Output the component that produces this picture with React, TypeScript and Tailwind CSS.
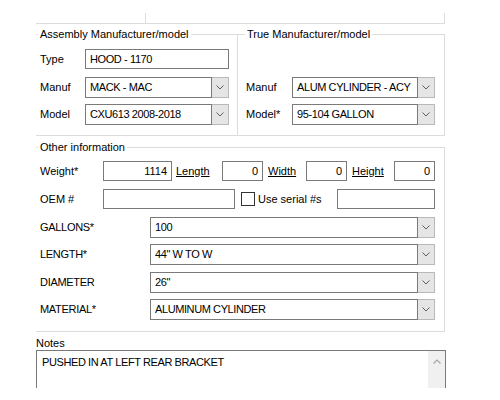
import type { ReactNode } from "react";

const FONT = { fontFamily: '"Liberation Sans", Arial, sans-serif' };

function Chevron({ color = "#5f5f5f" }: { color?: string }) {
  return (
    <svg width="8" height="5" viewBox="0 0 8 5" className="block">
      <path d="M0.5 0.5 L4 4 L7.5 0.5" fill="none" stroke={color} strokeWidth="1" />
    </svg>
  );
}

function TextBox({
  w,
  value,
  right,
  caps,
}: {
  w: string;
  value?: string;
  right?: boolean;
  caps?: boolean;
}) {
  return (
    <div
      className={`${w} h-[20px] border border-[#7a7a7a] bg-white flex items-center px-[4px] ${right ? "justify-end" : ""} ${caps ? "tracking-[-0.4px]" : ""}`}
    >
      {value}
    </div>
  );
}

function Combo({ w, value }: { w: string; value: string }) {
  return (
    <div className={`${w} h-[21px] flex`}>
      <div className="flex-1 border border-[#7a7a7a] bg-white flex items-center px-[4px] tracking-[-0.4px] whitespace-nowrap overflow-hidden">
        {value}
      </div>
      <div className="w-[17px] bg-[#e5e5e5] border-y border-r border-[#b9b9b9] flex items-center justify-center">
        <Chevron />
      </div>
    </div>
  );
}

function Legend({ children, ml }: { children: ReactNode; ml: string }) {
  return <legend className={`${ml} px-[2px] leading-[16px]`}>{children}</legend>;
}

export default function App() {
  return (
    <div className="w-[500px] h-[400px] bg-white text-[11px] text-black overflow-hidden" style={FONT}>
      <div className="pl-[36px] pt-[13px]">
        {/* tail of the section above */}
        <div className="flex w-[409px] h-[11px] border-b border-[#dcdcdc]">
          <div className="w-[110px] border-r border-[#dcdcdc]" />
          <div className="flex-1 border-r border-[#dcdcdc]" />
        </div>

        {/* manufacturer groups */}
        <div className="flex mt-[2px]">
          <fieldset className="w-[202px] h-[110px] border-t border-r border-b border-[#dcdcdc]">
            <Legend ml="ml-[2px]">Assembly Manufacturer/model</Legend>
            <div className="flex items-center mt-[7px]">
              <span className="w-[49px] pl-[4px]">Type</span>
              <TextBox w="w-[144px]" value="HOOD - 1170" caps />
            </div>
            <div className="flex items-center mt-[8px]">
              <span className="w-[49px] pl-[4px]">Manuf</span>
              <Combo w="w-[144px]" value="MACK - MAC" />
            </div>
            <div className="flex items-center mt-[6px]">
              <span className="w-[49px] pl-[4px]">Model</span>
              <Combo w="w-[144px]" value="CXU613 2008-2018" />
            </div>
          </fieldset>
          <fieldset className="w-[207px] h-[110px] border-t border-r border-b border-[#dcdcdc]">
            <Legend ml="ml-[7px]">True Manufacturer/model</Legend>
            <div className="flex items-center mt-[35px]">
              <span className="w-[54px] pl-[8px]">Manuf</span>
              <Combo w="w-[143px]" value="ALUM CYLINDER - ACY" />
            </div>
            <div className="flex items-center mt-[6px]">
              <span className="w-[54px] pl-[8px]">Model*</span>
              <Combo w="w-[143px]" value="95-104 GALLON" />
            </div>
          </fieldset>
        </div>

        {/* other information */}
        <fieldset className="mt-[3px] w-[409px] h-[193px] border-t border-r border-b border-[#dcdcdc]">
          <Legend ml="ml-[2px]">Other information</Legend>
          <div className="flex items-center mt-[6px]">
            <span className="w-[67px] pl-[4px]">Weight*</span>
            <TextBox w="w-[69px]" value="1114" right />
            <span className="ml-[4px] w-[46px] underline">Length</span>
            <TextBox w="w-[41px]" value="0" right />
            <span className="ml-[5px] w-[38px] underline">Width</span>
            <TextBox w="w-[41px]" value="0" right />
            <span className="ml-[5px] w-[42px] underline">Height</span>
            <TextBox w="w-[41px]" value="0" right />
          </div>
          <div className="flex items-center mt-[8px]">
            <span className="w-[67px] pl-[4px]">OEM #</span>
            <TextBox w="w-[132px]" />
            <div className="w-[102px] flex items-center">
              <span className="ml-[6px] w-[14px] h-[14px] border border-[#333333] bg-white" />
              <span className="ml-[3px]">Use serial #s</span>
            </div>
            <TextBox w="w-[98px]" />
          </div>
          {[
            ["GALLONS*", "100", "mt-[8px]"],
            ["LENGTH*", '44" W TO W', "mt-[6px]"],
            ["DIAMETER", '26"', "mt-[7px]"],
            ["MATERIAL*", "ALUMINUM CYLINDER", "mt-[6px]"],
          ].map(([label, value, mt]) => (
            <div key={label} className={`flex items-center ${mt}`}>
              <span className="w-[114px] pl-[4px] tracking-[-0.3px]">{label}</span>
              <Combo w="w-[285px]" value={value} />
            </div>
          ))}
        </fieldset>

        {/* notes */}
        <div className="mt-[4px] leading-[14px]">Notes</div>
        <div className="w-[410px] h-[38px] border-t border-x border-[#7a7a7a] flex">
          <div className="flex-1 pl-[5px] pt-[3px] tracking-[-0.4px]">PUSHED IN AT LEFT REAR BRACKET</div>
          <div className="w-[17px] bg-[#f0f0f0] flex justify-center pt-[8px]">
            <svg width="8" height="5" viewBox="0 0 8 5" className="block">
              <path d="M0.5 4.5 L4 1 L7.5 4.5" fill="none" stroke="#a6a6a6" strokeWidth="1.2" />
            </svg>
          </div>
        </div>
      </div>
    </div>
  );
}
